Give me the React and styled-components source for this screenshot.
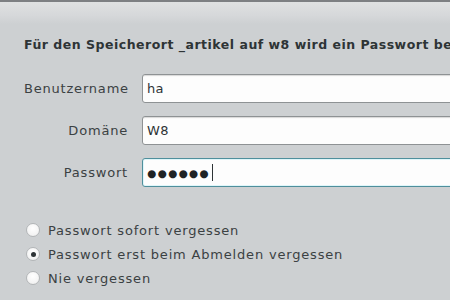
import React from "react";
import styled, { createGlobalStyle } from "styled-components";

const Global = createGlobalStyle`
	html, body {
		margin: 0;
		padding: 0;
		width: 450px;
		height: 300px;
		overflow: hidden;
		background: #cdd0d2;
	}
	body {
		font-family: "DejaVu Sans", "Noto Sans", sans-serif;
	}
`;

export default function App(){
	return (
		<Screen>
			<Global />
			<TopBar />
			<Content>
				<Title>Für den Speicherort _artikel auf w8 wird ein Passwort benötigt.</Title>
				<Form>
					<Label>Benutzername</Label>
					<Field>ha</Field>
					<Label>Domäne</Label>
					<Field>W8</Field>
					<Label>Passwort</Label>
					<Field focused>
						<Dots>●●●●●●</Dots>
						<Caret />
					</Field>
				</Form>
				<Options>
					<Option>
						<Radio />
						<span>Passwort sofort vergessen</span>
					</Option>
					<Option>
						<Radio checked />
						<span>Passwort erst beim Abmelden vergessen</span>
					</Option>
					<Option>
						<Radio />
						<span>Nie vergessen</span>
					</Option>
				</Options>
			</Content>
		</Screen>
	)
}

const Screen = styled.div`
	width: 450px;
	height: 300px;
	overflow: hidden;
	background: #cdd0d2;
`;

const TopBar = styled.div`
	height: 22px;
	border-top: 2px solid #7d8083;
	background: linear-gradient(180deg, #dfe1e2 0%, #d6d8da 60%, #cdd0d2 100%);
`;

const Content = styled.div`
	width: 640px;
	padding: 13px 0 0 24px;
`;

const Title = styled.div`
	color: #2e3436;
	font-size: 12.5px;
	font-weight: 700;
	letter-spacing: 0.5px;
	white-space: nowrap;
	height: 16px;
	line-height: 16px;
`;

const Form = styled.div`
	display: grid;
	grid-template-columns: 104px 1fr;
	column-gap: 14px;
	row-gap: 13px;
	align-items: center;
	margin-top: 21px;
`;

const Label = styled.div`
	color: #3b4143;
	font-size: 13px;
	letter-spacing: 0.8px;
	text-align: right;
	white-space: nowrap;
`;

const Field = styled.div`
	box-sizing: border-box;
	display: flex;
	align-items: center;
	height: 29px;
	padding: 0 4px;
	font-size: 13px;
	letter-spacing: 0.3px;
	color: #2e3436;
	background: #fdfdfd;
	border: 1px solid ${p => p.focused ? "#4f8f9c" : "#8e9294"};
	border-radius: 3px;
	box-shadow: ${p => p.focused ? "inset 0 0 0 1px #dff6fa" : "inset 0 2px 1px -1px #d8d8d8"};
`;

const Dots = styled.span`
	font-size: 10.5px;
	letter-spacing: 1.3px;
	color: #1f2325;
`;

const Caret = styled.span`
	width: 1px;
	height: 17px;
	margin-left: 2px;
	background: #2e3436;
`;

const Options = styled.div`
	display: flex;
	flex-direction: column;
	gap: 6px;
	margin-top: 34px;
	padding-left: 2px;
`;

const Option = styled.label`
	display: flex;
	align-items: center;
	gap: 8px;
	height: 18px;
	color: #3b4143;
	font-size: 13px;
	letter-spacing: 0.82px;
`;

const Radio = styled.span`
	box-sizing: border-box;
	width: 14px;
	height: 14px;
	border-radius: 50%;
	border: 1px solid #b3b6b8;
	background: radial-gradient(circle at 50% 35%, #ffffff 0%, #f3f3f3 70%, #e4e4e4 100%);
	display: flex;
	align-items: center;
	justify-content: center;
	&::after {
		content: "";
		width: 5px;
		height: 5px;
		border-radius: 50%;
		background: #2e3436;
		display: ${p => p.checked ? "block" : "none"};
	}
`;
